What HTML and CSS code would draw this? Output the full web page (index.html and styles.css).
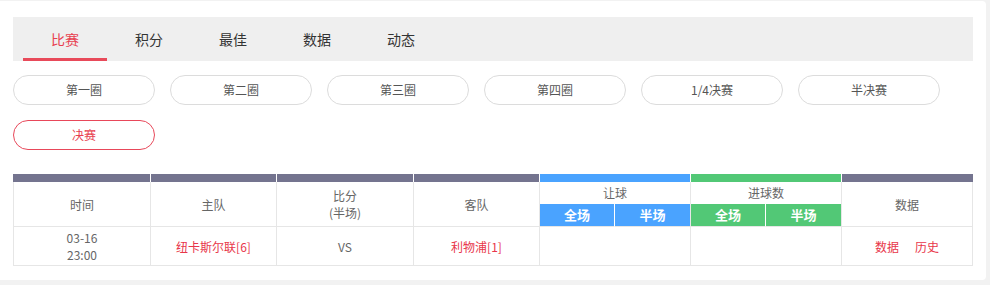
FILE: index.html
```html
<!DOCTYPE html>
<html lang="zh-CN">
<head>
<meta charset="utf-8">
<title>赛程</title>
<link rel="stylesheet" href="styles.css">
</head>
<body>
<div class="card">
  <div class="tabs">
    <div class="tab active">比赛</div>
    <div class="tab">积分</div>
    <div class="tab">最佳</div>
    <div class="tab">数据</div>
    <div class="tab">动态</div>
  </div>
  <div class="rounds">
    <div class="round">第一圈</div>
    <div class="round">第二圈</div>
    <div class="round">第三圈</div>
    <div class="round">第四圈</div>
    <div class="round">1/4决赛</div>
    <div class="round">半决赛</div>
    <div class="round active">决赛</div>
  </div>
  <table class="matches">
    <colgroup>
      <col class="c1"><col class="c2"><col class="c3"><col class="c4"><col class="c5a"><col class="c5b"><col class="c6a"><col class="c6b"><col class="c7">
    </colgroup>
    <thead>
      <tr class="bar">
        <td class="gray first"></td>
        <td class="gray"></td>
        <td class="gray"></td>
        <td class="gray"></td>
        <td class="blue" colspan="2"></td>
        <td class="green" colspan="2"></td>
        <td class="gray"></td>
      </tr>
      <tr class="head">
        <th rowspan="2" class="first">时间</th>
        <th rowspan="2">主队</th>
        <th rowspan="2">比分<br>(半场)</th>
        <th rowspan="2">客队</th>
        <th colspan="2" class="group">让球</th>
        <th colspan="2" class="group">进球数</th>
        <th rowspan="2">数据</th>
      </tr>
      <tr class="sub">
        <th class="sub-blue split">全场</th>
        <th class="sub-blue">半场</th>
        <th class="sub-green split">全场</th>
        <th class="sub-green">半场</th>
      </tr>
    </thead>
    <tbody>
      <tr class="row">
        <td class="first">03-16<br>23:00</td>
        <td class="red">纽卡斯尔联[6]</td>
        <td>VS</td>
        <td class="red">利物浦[1]</td>
        <td colspan="2"></td>
        <td colspan="2"></td>
        <td class="links"><span class="red">数据</span><span class="red">历史</span></td>
      </tr>
    </tbody>
  </table>
</div>
</body>
</html>
```

FILE: styles.css
```css
* { box-sizing: border-box; }
html, body { margin: 0; padding: 0; }
body {
  background: #f2f2f2;
  font-family: "Noto Sans CJK SC", "Noto Sans", sans-serif;
  width: 990px;
  height: 285px;
  overflow: hidden;
}
.card {
  margin-top: 1px;
  width: 986px;
  height: 279px;
  background: #fff;
  border-radius: 0 4px 4px 0;
  padding: 16px 13px 15px;
}
.tabs {
  display: flex;
  height: 44px;
  background: #efefef;
  padding-left: 10px;
}
.tab {
  width: 84px;
  height: 44px;
  line-height: 44px;
  text-align: center;
  font-size: 14px;
  color: #333;
}
.tab.active {
  color: #e8404f;
  border-bottom: 3px solid #e84a5a;
  line-height: 44px;
}
.rounds {
  display: flex;
  flex-wrap: wrap;
  gap: 15px;
  margin-top: 14px;
  width: 960px;
}
.round {
  width: 142px;
  height: 30px;
  border: 1px solid #dcdcdc;
  border-radius: 15px;
  font-size: 12px;
  color: #555;
  text-align: center;
  line-height: 28px;
}
.round.active {
  border-color: #e8485a;
  color: #e8404f;
}
.matches {
  margin-top: 24px;
  width: 960px;
  border-collapse: separate;
  border-spacing: 0;
  table-layout: fixed;
  font-size: 12px;
  color: #666;
}
col.c1 { width: 138px; }
col.c2 { width: 126px; }
col.c3 { width: 137px; }
col.c4 { width: 126px; }
col.c5a { width: 75px; }
col.c5b { width: 76px; }
col.c6a { width: 75px; }
col.c6b { width: 76px; }
col.c7 { width: 131px; }
.matches td, .matches th {
  padding: 0;
  text-align: center;
  font-weight: normal;
}
.bar td {
  height: 8px;
  border-right: 1px solid #fff;
}
.bar td.first { border-left: 1px solid #74748f; }
.bar td:last-child { border-right: 1px solid #74748f; }
.bar .gray { background: #74748f; }
.bar .blue { background: #4aa3ff; }
.bar .green { background: #52c876; }
.head th, .sub th, .row td {
  border-right: 1px solid #e6e6e6;
}
.head th.first, .row td.first { border-left: 1px solid #e6e6e6; }
.head th[rowspan] {
  border-bottom: 1px solid #e6e6e6;
  line-height: 17px;
}
.head th.group {
  height: 22px;
  line-height: 20px;
}
.sub th {
  height: 23px;
  color: #fff;
  font-weight: bold;
  font-size: 13px;
  border-bottom: 1px solid #e6e6e6;
  line-height: 22px;
}
.sub th.split { border-right: 1px solid #fff; }
.sub-blue { background: #4aa3ff; }
.sub-green { background: #52c876; }
.row td {
  height: 39px;
  border-bottom: 1px solid #e6e6e6;
  line-height: 17px;
}
.red { color: #e8364a; }
.links span { margin: 0 8px; }
```
